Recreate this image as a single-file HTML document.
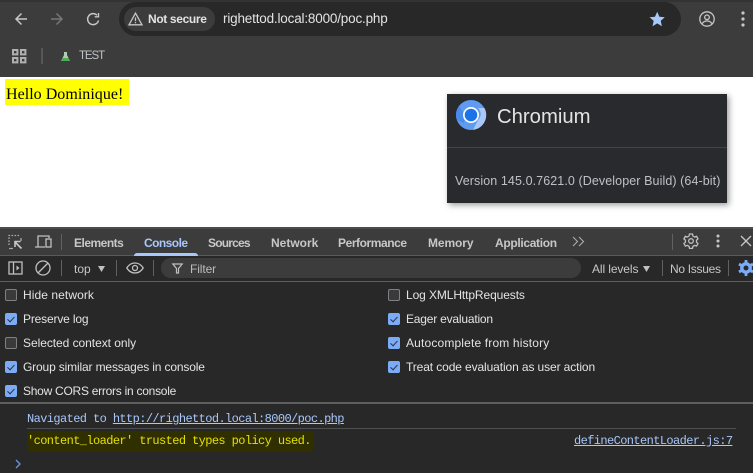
<!DOCTYPE html>
<html><head><meta charset="utf-8"><style>
html,body{margin:0;padding:0;background:#fff}
#p{position:relative;width:753px;height:473px;overflow:hidden;font-family:"Liberation Sans",sans-serif;background:#fff}
.a{position:absolute}
.t{position:absolute;white-space:nowrap;font-size:12px;line-height:16px;color:#e3e3e3}
.m{font-family:"Liberation Mono",monospace;letter-spacing:-.6px;font-size:12px}
.b{font-weight:bold;color:#c7c7c7;top:235px}
.cb{position:absolute;left:5px;width:12px;height:12px;box-sizing:border-box;border-radius:2px;border:1px solid #7e8084;background:#3a3a3a}
.cb.on{background:#7cacf8;border-color:#7cacf8}
.cb.on:after{content:"";position:absolute;left:3px;top:1px;width:3px;height:6px;border:solid #303236;border-width:0 1.6px 1.6px 0;transform:rotate(42deg)}
.s{position:absolute;width:1px;background:#5f6163}
svg{position:absolute;overflow:visible}
</style></head><body><div id="p">

<div class="a" style="left:0;top:0;width:753px;height:77px;background:#3c3c3c"></div>
<div class="a" style="left:0;top:0;width:753px;height:2px;background:#333"></div>

<svg style="left:15px;top:13px" width="12" height="12" fill="none" stroke="#c7c7c7" stroke-width="1.5"><path d="M12 6H1M6.500 .5L1 6l5.500 5.500"/></svg>
<svg style="left:51px;top:13px" width="12" height="12" fill="none" stroke="#777" stroke-width="1.5"><path d="M0 6h11M5.500 .5L11 6l-5.500 5.500"/></svg>
<svg style="left:87px;top:13px" width="12" height="12" fill="none" stroke="#c7c7c7" stroke-width="1.5"><path d="M11.500 7.500A5.500 5.500 0 1 1 10 2.200"/><path d="M11.500 0v3.800H7.700" stroke-width="1.4"/></svg>

<div class="a" style="left:119px;top:2px;width:562px;height:34px;border-radius:17px;background:#282828"></div>
<div class="a" style="left:124px;top:7px;width:91px;height:24px;border-radius:12px;background:#3c3c3c"></div>
<svg style="left:128px;top:12px" width="15" height="14" fill="none" stroke="#c7c7c7" stroke-width="1.3"><path d="M7.500 1.200L14 12.800H1z"/><path d="M7.500 5.500v3.600M7.500 10v1.300"/></svg>
<div class="t" style="left:148px;top:11px;font-size:12px;font-weight:bold;color:#e3e3e3;letter-spacing:-.35px">Not secure</div>
<div class="t" style="left:223px;top:10px;font-size:13.5px;line-height:18px;color:#e3e3e3;letter-spacing:-.18px">righettod.local:8000/poc.php</div>
<svg style="left:649px;top:11px" width="17" height="16" fill="#a8c7fa"><path d="M8.200 .8l2.200 5 5.400.5-4.100 3.600 1.200 5.300-4.700-2.800-4.700 2.800 1.200-5.300L.6 6.300 6 5.800z"/></svg>
<svg style="left:699px;top:11px" width="16" height="16" fill="none" stroke="#c7c7c7" stroke-width="1.300"><circle cx="8" cy="8" r="7.200"/><circle cx="8" cy="6.300" r="2.300"/><path d="M3.300 12.600c1-2 2.800-2.600 4.700-2.600s3.700.6 4.700 2.600"/></svg>
<svg style="left:741px;top:11px" width="4" height="16" fill="#c7c7c7"><circle cx="2" cy="2" r="1.600"/><circle cx="2" cy="8" r="1.600"/><circle cx="2" cy="14" r="1.600"/></svg>

<svg style="left:12px;top:49px" width="15" height="15" fill="none" stroke="#b0b0b0" stroke-width="2"><rect x="1" y="1" width="4.400" height="4.400"/><rect x="9" y="1" width="4.400" height="4.400"/><rect x="1" y="9" width="4.400" height="4.400"/><rect x="9" y="9" width="4.400" height="4.400"/></svg>
<div class="a" style="left:41px;top:48px;width:2px;height:16px;background:#575757"></div>
<svg style="left:60px;top:51px" width="11" height="11"><path d="M4 1h3v3l3 6H1l3-6z" fill="#b5c9b5"/><path d="M2.600 7h5.800l1.400 3H1.200z" fill="#4caf50"/></svg>
<div class="t" style="left:79px;top:48px;font-size:11.5px;color:#bdc1c6;letter-spacing:-1.1px">TEST</div>

<div class="a" style="left:5px;top:79px;width:124px;height:26px;background:#ff0"></div>
<div class="t" style="left:6px;top:85px;font-family:'Liberation Serif',serif;font-size:16px;line-height:19px;color:#000;letter-spacing:.03px">Hello Dominique!</div>

<div class="a" style="left:447px;top:94px;width:280px;height:109px;background:#292a2d;box-shadow:2px 2px 6px rgba(0,0,0,.4)"></div>
<div class="a" style="left:447px;top:147px;width:280px;height:1px;background:#434446"></div>
<svg style="left:456px;top:100px" width="30" height="30"><circle cx="15" cy="15" r="15" fill="#5f9bf0"/><path d="M15 8h13.500A15 15 0 0 1 17 29.900L22 20a8 8 0 0 0 0-12z" fill="#a9c7f8"/><path d="M3 6a15 15 0 0 0-2 14l7 3 1-8z" fill="#4a8aec"/><circle cx="15" cy="15" r="8" fill="#fff"/><circle cx="15" cy="15" r="6.300" fill="#1a73e8"/></svg>
<div class="t" style="left:497px;top:104px;font-size:20.3px;line-height:26px;color:#e3e3e3">Chromium</div>
<div class="t" style="left:455px;top:173px;font-size:12.5px;color:#bdc1c6;letter-spacing:.09px">Version 145.0.7621.0 (Developer Build) (64-bit)</div>

<div class="a" style="left:0;top:227px;width:753px;height:246px;background:#282828"></div>
<div class="a" style="left:0;top:227px;width:753px;height:2px;background:#4c4c4c"></div>
<div class="a" style="left:0;top:229px;width:753px;height:27px;background:#3c3c3c"></div>
<div class="a" style="left:0;top:255px;width:753px;height:1px;background:#5a5a5a"></div>
<div class="a" style="left:0;top:256px;width:753px;height:25px;background:#282828"></div>
<div class="a" style="left:0;top:281px;width:753px;height:1px;background:#5f5f5f"></div>

<svg style="left:8px;top:234px" width="16" height="16" fill="none" stroke="#a8a8a8" stroke-width="1.300"><path d="M1 11V1.500h10.500" stroke-dasharray="1.600 1.400"/><path d="M1 14.500h4M13 4v3"/><path d="M13.500 14.500L7 8M7 13V7.500h5.500" stroke="#c7c7c7" stroke-width="1.600"/></svg>
<svg style="left:35px;top:234px" width="18" height="15" fill="none" stroke="#c0c0c0" stroke-width="1.300"><path d="M0 13h10M3 13V2h11v2"/><rect x="11" y="5" width="5" height="8"/></svg>
<div class="s" style="left:61px;top:234px;height:16px"></div>
<div class="t b" style="left:74px;letter-spacing:-.5px">Elements</div>
<div class="t b" style="left:144px;color:#a8c7fa;letter-spacing:-.55px">Console</div>
<div class="a" style="left:134px;top:253px;width:64px;height:3px;background:#a8c7fa;border-radius:3px 3px 0 0"></div>
<div class="t b" style="left:208px;letter-spacing:-.8px">Sources</div>
<div class="t b" style="left:271px;letter-spacing:0">Network</div>
<div class="t b" style="left:338px;letter-spacing:-.43px">Performance</div>
<div class="t b" style="left:428px;letter-spacing:-.1px">Memory</div>
<div class="t b" style="left:495px;letter-spacing:-.33px">Application</div>
<svg style="left:572px;top:236px" width="13" height="11" fill="none" stroke="#a8a8a8" stroke-width="1.200"><path d="M1 1l4.500 4.500L1 10M7 1l4.500 4.500L7 10"/></svg>
<div class="s" style="left:672px;top:234px;height:16px"></div>
<svg style="left:683px;top:233px" width="16" height="16" fill="none" stroke="#c0c0c0" stroke-width="1.300"><path d="M6.500 1h3l.4 2 1.700 1 2-.7 1.400 2.600-1.500 1.300v2l1.500 1.300-1.400 2.600-2-.7-1.700 1-.4 2h-3l-.4-2-1.700-1-2 .7L.9 10.500l1.500-1.300v-2L.9 5.900l1.400-2.600 2 .7 1.700-1z"/><circle cx="8" cy="8" r="2.300"/></svg>
<svg style="left:716px;top:234px" width="4" height="14" fill="#c7c7c7"><circle cx="2" cy="2" r="1.500"/><circle cx="2" cy="7" r="1.500"/><circle cx="2" cy="12" r="1.500"/></svg>
<svg style="left:740px;top:235px" width="12" height="12" fill="none" stroke="#c7c7c7" stroke-width="1.300"><path d="M1 1l10 10M11 1L1 11"/></svg>

<svg style="left:8px;top:261px" width="15" height="14" fill="none" stroke="#c0c0c0" stroke-width="1.300"><rect x="1" y="1" width="13" height="12"/><path d="M5.500 1v12"/><path d="M8.500 4.500l3 2.500-3 2.500z" fill="#c0c0c0" stroke="none"/></svg>
<svg style="left:35px;top:260px" width="16" height="16" fill="none" stroke="#c0c0c0" stroke-width="1.300"><circle cx="8" cy="8" r="7"/><path d="M3 13L13 3"/></svg>
<div class="s" style="left:61px;top:260px;height:16px"></div>
<div class="t" style="left:74px;top:261px;color:#c7c7c7">top</div>
<svg style="left:98px;top:266px" width="7" height="6" fill="#c0c0c0"><path d="M0 0h7L3.500 6z"/></svg>
<div class="s" style="left:116px;top:260px;height:16px"></div>
<svg style="left:126px;top:262px" width="18" height="12" fill="none" stroke="#c0c0c0" stroke-width="1.300"><path d="M.8 6C3 2.500 6 1 9 1s6 1.500 8.200 5C15 9.500 12 11 9 11S3 9.500.8 6z"/><circle cx="9" cy="6" r="2.500"/></svg>
<div class="s" style="left:153px;top:260px;height:16px"></div>
<div class="a" style="left:161px;top:258px;width:420px;height:20px;border-radius:10px;background:#3c3c3c"></div>
<svg style="left:172px;top:263px" width="11" height="11" fill="none" stroke="#c0c0c0" stroke-width="1.200"><path d="M.8 1h9.400L6.500 5.500V10h-2V5.500z"/></svg>
<div class="t" style="left:190px;top:261px;color:#bdbdbd;letter-spacing:-.1px">Filter</div>
<div class="t" style="left:592px;top:261px;color:#c7c7c7;letter-spacing:-.1px">All levels</div>
<svg style="left:643px;top:266px" width="7" height="6" fill="#c0c0c0"><path d="M0 0h7L3.500 6z"/></svg>
<div class="s" style="left:662px;top:260px;height:16px"></div>
<div class="t" style="left:670px;top:261px;color:#c7c7c7;letter-spacing:-.3px">No Issues</div>
<div class="s" style="left:728px;top:260px;height:16px"></div>
<svg style="left:738px;top:260px" width="16" height="16" fill="none" stroke="#7cacf8" stroke-width="3.400"><circle cx="8" cy="8" r="4.200"/><path d="M8 0v3M8 13v3M1 4l2.500 1.500M12.500 10.500L15 12M1 12l2.500-1.500M12.500 5.500L15 4" stroke-width="2.800"/></svg>

<div class="cb" style="top:289px"></div><div class="t" style="left:23px;top:287px;letter-spacing:.08px">Hide network</div>
<div class="cb on" style="top:313px"></div><div class="t" style="left:23px;top:311px;letter-spacing:-.17px">Preserve log</div>
<div class="cb" style="top:337px"></div><div class="t" style="left:23px;top:335px;letter-spacing:-.05px">Selected context only</div>
<div class="cb on" style="top:361px"></div><div class="t" style="left:23px;top:359px;letter-spacing:-.15px">Group similar messages in console</div>
<div class="cb on" style="top:385px"></div><div class="t" style="left:23px;top:383px;letter-spacing:-.26px">Show CORS errors in console</div>
<div class="cb" style="left:388px;top:289px"></div><div class="t" style="left:406px;top:287px;letter-spacing:-.1px">Log XMLHttpRequests</div>
<div class="cb on" style="left:388px;top:313px"></div><div class="t" style="left:406px;top:311px;letter-spacing:-.2px">Eager evaluation</div>
<div class="cb on" style="left:388px;top:337px"></div><div class="t" style="left:406px;top:335px;letter-spacing:.16px">Autocomplete from history</div>
<div class="cb on" style="left:388px;top:361px"></div><div class="t" style="left:406px;top:359px;letter-spacing:-.11px">Treat code evaluation as user action</div>

<div class="a" style="left:0;top:402px;width:753px;height:2px;background:#5f5f5f"></div>
<div class="t m" style="left:27px;top:411px;color:#a8c7fa">Navigated to <span style="text-decoration:underline">http://righettod.local:8000/poc.php</span></div>
<div class="a" style="left:27px;top:428px;width:709px;height:1px;background:#4f4f4f"></div>
<div class="a" style="left:27px;top:431px;width:286px;height:21px;background:#2f2f00"></div>
<div class="t m" style="left:27px;top:433px;color:#e6e000">'content_loader' trusted types policy used.</div>
<div class="t m" style="left:574px;top:433px;color:#a8c7fa;text-decoration:underline">defineContentLoader.js:7</div>
<svg style="left:15px;top:459px" width="7" height="10" fill="none" stroke="#6a96dc" stroke-width="1.300"><path d="M1 1l4 4-4 4"/></svg>

</div></body></html>
